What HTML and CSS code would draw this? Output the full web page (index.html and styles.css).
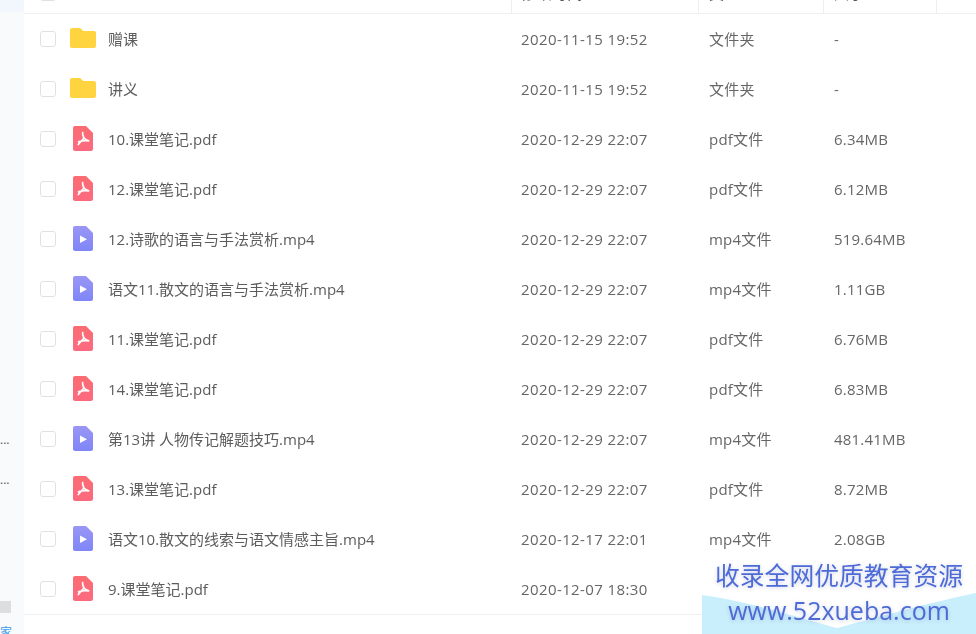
FILE: index.html
```html
<!DOCTYPE html>
<html lang="zh-CN">
<head>
    <meta charset="UTF-8">
    <title>文件列表</title>
    <link rel="stylesheet" href="styles.css">
</head>
<body>
    <svg class="defs" width="0" height="0">
        <defs>
            <linearGradient id="pdfFill" x1="0" y1="0" x2="0" y2="1">
                <stop offset="0" stop-color="#fa6c72"/>
                <stop offset="1" stop-color="#fd6a80"/>
            </linearGradient>
            <linearGradient id="videoFill" x1="0" y1="0" x2="0" y2="1">
                <stop offset="0" stop-color="#9a96f4"/>
                <stop offset="1" stop-color="#7f86f8"/>
            </linearGradient>
        </defs>
        <symbol id="folder" viewBox="0 0 26 20">
            <path d="M2 0h7c1 0 1.600.4 2.200 1l2 2H24c1.100 0 2 .9 2 2v13c0 1.100-.9 2-2 2H2c-1.100 0-2-.9-2-2V2C0 .9.900 0 2 0z" fill="#ffd440"/>
        </symbol>
        <symbol id="pdf" viewBox="0 0 20 25">
            <path d="M2 0h11l7 7v16c0 1.100-.9 2-2 2H2c-1.100 0-2-.9-2-2V2C0 .9.900 0 2 0z" fill="url(#pdfFill)"/>
            <path d="M9.800 6.500c-.8.800.2 3 1.200 5.500l-5.700 6.500M10.500 11.500c1 1.500 2.500 2.500 5.200 3.300-3.200-.3-6.800-.2-10.200 1" fill="none" stroke="#fff" stroke-width="1.700" stroke-linecap="round" stroke-linejoin="round"/>
        </symbol>
        <symbol id="video" viewBox="0 0 20 25">
            <path d="M2 0h11l7 7v16c0 1.100-.9 2-2 2H2c-1.100 0-2-.9-2-2V2C0 .9.900 0 2 0z" fill="url(#videoFill)"/>
            <path d="M7 9.500l7 3.800-7 3.800z" fill="#fff"/>
        </symbol>
    </svg>

    <div class="app">
        <div class="sidebar">
            <div class="side-active"></div>
            <div class="side-list">
                <span>...</span>
                <span>...</span>
            </div>
            <div class="side-bar"></div>
            <div class="side-link">家</div>
        </div>

        <div class="main">
            <div class="list">
                <div class="row head">
                    <div class="cell name"><span class="check"></span><span class="head-name">文件名</span></div>
                    <div class="cell">修改时间</div>
                    <div class="cell">类型</div>
                    <div class="cell">大小</div>
                    <div class="cell"></div>
                </div>

                <div class="row">
                    <div class="cell name"><span class="check"></span><svg class="icon folder"><use href="#folder"/></svg>赠课</div>
                    <div class="cell">2020-11-15 19:52</div>
                    <div class="cell">文件夹</div>
                    <div class="cell">-</div>
                </div>
                <div class="row">
                    <div class="cell name"><span class="check"></span><svg class="icon folder"><use href="#folder"/></svg>讲义</div>
                    <div class="cell">2020-11-15 19:52</div>
                    <div class="cell">文件夹</div>
                    <div class="cell">-</div>
                </div>
                <div class="row">
                    <div class="cell name"><span class="check"></span><svg class="icon file"><use href="#pdf"/></svg>10.课堂笔记.pdf</div>
                    <div class="cell">2020-12-29 22:07</div>
                    <div class="cell">pdf文件</div>
                    <div class="cell">6.34MB</div>
                </div>
                <div class="row">
                    <div class="cell name"><span class="check"></span><svg class="icon file"><use href="#pdf"/></svg>12.课堂笔记.pdf</div>
                    <div class="cell">2020-12-29 22:07</div>
                    <div class="cell">pdf文件</div>
                    <div class="cell">6.12MB</div>
                </div>
                <div class="row">
                    <div class="cell name"><span class="check"></span><svg class="icon file"><use href="#video"/></svg>12.诗歌的语言与手法赏析.mp4</div>
                    <div class="cell">2020-12-29 22:07</div>
                    <div class="cell">mp4文件</div>
                    <div class="cell">519.64MB</div>
                </div>
                <div class="row">
                    <div class="cell name"><span class="check"></span><svg class="icon file"><use href="#video"/></svg>语文11.散文的语言与手法赏析.mp4</div>
                    <div class="cell">2020-12-29 22:07</div>
                    <div class="cell">mp4文件</div>
                    <div class="cell">1.11GB</div>
                </div>
                <div class="row">
                    <div class="cell name"><span class="check"></span><svg class="icon file"><use href="#pdf"/></svg>11.课堂笔记.pdf</div>
                    <div class="cell">2020-12-29 22:07</div>
                    <div class="cell">pdf文件</div>
                    <div class="cell">6.76MB</div>
                </div>
                <div class="row">
                    <div class="cell name"><span class="check"></span><svg class="icon file"><use href="#pdf"/></svg>14.课堂笔记.pdf</div>
                    <div class="cell">2020-12-29 22:07</div>
                    <div class="cell">pdf文件</div>
                    <div class="cell">6.83MB</div>
                </div>
                <div class="row">
                    <div class="cell name"><span class="check"></span><svg class="icon file"><use href="#video"/></svg>第13讲 人物传记解题技巧.mp4</div>
                    <div class="cell">2020-12-29 22:07</div>
                    <div class="cell">mp4文件</div>
                    <div class="cell">481.41MB</div>
                </div>
                <div class="row">
                    <div class="cell name"><span class="check"></span><svg class="icon file"><use href="#pdf"/></svg>13.课堂笔记.pdf</div>
                    <div class="cell">2020-12-29 22:07</div>
                    <div class="cell">pdf文件</div>
                    <div class="cell">8.72MB</div>
                </div>
                <div class="row">
                    <div class="cell name"><span class="check"></span><svg class="icon file"><use href="#video"/></svg>语文10.散文的线索与语文情感主旨.mp4</div>
                    <div class="cell">2020-12-17 22:01</div>
                    <div class="cell">mp4文件</div>
                    <div class="cell">2.08GB</div>
                </div>
                <div class="row">
                    <div class="cell name"><span class="check"></span><svg class="icon file"><use href="#pdf"/></svg>9.课堂笔记.pdf</div>
                    <div class="cell">2020-12-07 18:30</div>
                    <div class="cell"></div>
                    <div class="cell"></div>
                </div>
            </div>
        </div>
    </div>

    <div class="watermark">
        <svg class="wave" viewBox="0 0 274 39" preserveAspectRatio="none">
            <path d="M0 0C55 8 100 24 135 33C170 24 225 8 274 -2V39H0z" fill="#c9effc"/>
        </svg>
        <div class="mark-title">收录全网优质教育资源</div>
        <div class="mark-url">www.52xueba.com</div>
    </div>
</body>
</html>
```

FILE: styles.css
```css
html, body {
    margin: 0;
    height: 100%;
    overflow: hidden;
}
body {
    font-family: "Open Sans", "Noto Sans CJK SC", sans-serif;
    font-size: 15px;
    color: #666;
    background: #fff;
}
.defs {
    display: block;
    height: 0;
}
.app {
    display: flex;
    height: 634px;
    filter: blur(.4px);
}
.sidebar {
    width: 24px;
    flex: none;
    display: flex;
    flex-direction: column;
    background: #f8fafc;
    overflow: hidden;
    font-size: 12px;
}
.sidebar > div {
    flex: none;
}
.side-active {
    height: 12px;
    background: #f1f7fd;
}
.side-list {
    display: flex;
    flex-direction: column;
    gap: 24px;
    height: 589px;
    padding-top: 420px;
    box-sizing: border-box;
    color: #555;
    line-height: 16px;
}
.side-bar {
    width: 11px;
    height: 12px;
    background: #dcdee0;
}
.side-link {
    margin-top: 10px;
    color: #3b9bea;
}
.main {
    flex: 1;
    overflow: hidden;
}
.list {
    margin-top: -37px;
    border-bottom: 1px solid #eef0f2;
}
.row {
    display: grid;
    grid-template-columns: 488px 187px 125px 113px 40px;
    height: 50px;
    align-items: center;
}
.row.head {
    border-bottom: 1px solid #f0f1f3;
}
.cell {
    display: flex;
    align-items: center;
    height: 100%;
    padding-left: 10px;
    box-sizing: border-box;
    white-space: nowrap;
    letter-spacing: .2px;
}
.cell:nth-child(2) {
    padding-left: 9px;
    letter-spacing: .4px;
}
.cell:nth-child(3) {
    padding-bottom: 2px;
}
.head .cell {
    padding-top: 9px;
    padding-bottom: 0;
    border-right: 1px solid #eceef0;
    color: #555;
}
.cell.name {
    padding-left: 16px;
    padding-bottom: 2px;
    color: #5c5c5c;
    letter-spacing: 0;
}
.check {
    width: 14px;
    height: 14px;
    flex: none;
    margin-top: 2px;
    border: 1px solid #dfe1e3;
    border-radius: 3px;
}
.icon {
    flex: none;
}
.icon.folder {
    width: 26px;
    height: 20px;
    margin: 0 12px 0 14px;
}
.icon.file {
    width: 20px;
    height: 25px;
    margin: 0 15px 0 17px;
}
.head-name {
    margin-left: 16px;
}
.watermark {
    position: absolute;
    right: 0;
    bottom: 0;
    width: 274px;
    height: 72px;
    text-align: center;
    color: #4c6bd6;
    background: #fff;
    text-shadow: 0 1px 4px rgba(90, 100, 170, .3);
}
.wave {
    position: absolute;
    left: 0;
    bottom: 0;
    width: 274px;
    height: 39px;
    overflow: visible;
}
.mark-title {
    position: relative;
    font-size: 24.800px;
    line-height: 32px;
    margin-top: -3px;
}
.mark-url {
    position: relative;
    font-size: 25px;
    line-height: 32px;
    margin-top: 3px;
}
```
